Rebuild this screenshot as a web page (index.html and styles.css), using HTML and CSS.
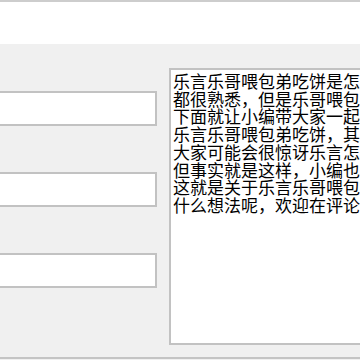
FILE: index.html
```html
<!DOCTYPE html>
<html lang="zh">
<head>
<meta charset="utf-8">
<title>Form</title>
<link rel="stylesheet" href="styles.css">
</head>
<body>
<div class="window">
  <div class="header"></div>
  <div class="main">
    <div class="fields">
      <input class="field" type="text">
      <input class="field" type="text">
      <input class="field" type="text">
    </div>
    <div class="memo">
      <div class="line">乐言乐哥喂包弟吃饼是怎么回事呢？乐言乐哥相信大家</div>
      <div class="line">都很熟悉，但是乐哥喂包弟吃饼是怎么回事呢，</div>
      <div class="line">下面就让小编带大家一起了解吧。</div>
      <div class="line">乐言乐哥喂包弟吃饼，其实就是乐哥在喂包弟，</div>
      <div class="line">大家可能会很惊讶乐言怎么会喂包弟吃饼呢？</div>
      <div class="line">但事实就是这样，小编也感到非常惊讶。</div>
      <div class="line">这就是关于乐言乐哥喂包弟吃饼的事情了，大家有</div>
      <div class="line">什么想法呢，欢迎在评论区告诉小编一起讨论哦！</div>
    </div>
  </div>
  <div class="footer"></div>
</div>
</body>
</html>
```
FILE: styles.css
```css
html, body {
  margin: 0;
  padding: 0;
  width: 360px;
  height: 360px;
  overflow: hidden;
  background: #f0f0f0;
}

.window {
  display: flex;
  flex-direction: column;
  width: 360px;
  height: 360px;
}

.header {
  height: 42px;
  background: #ffffff;
  border-top: 2px solid #cdcdcd;
  flex: none;
}

.main {
  display: flex;
  gap: 12px;
  padding-top: 24px;
  height: 277px;
  flex: none;
}

.fields {
  width: 157px;
  flex: none;
  overflow: hidden;
  display: flex;
  flex-direction: column;
  gap: 46px;
  padding-top: 23px;
}

.field {
  display: block;
  box-sizing: border-box;
  width: 170px;
  height: 35px;
  margin: 0 0 0 -13px;
  padding: 0;
  background: #ffffff;
  border: 2px solid #c2c2c2;
  outline: none;
}

.memo {
  box-sizing: border-box;
  width: 260px;
  height: 277px;
  flex: none;
  background: #ffffff;
  border: 2px solid #c2c2c2;
  padding: 2px 0 0 2px;
  overflow: hidden;
  font-family: "Noto Sans CJK SC", sans-serif;
  font-size: 17px;
  line-height: 17.7px;
  color: #000000;
}

.line {
  white-space: nowrap;
}

.footer {
  margin-top: 12px;
  height: 2px;
  background: #c4c4c4;
  flex: none;
}
```
